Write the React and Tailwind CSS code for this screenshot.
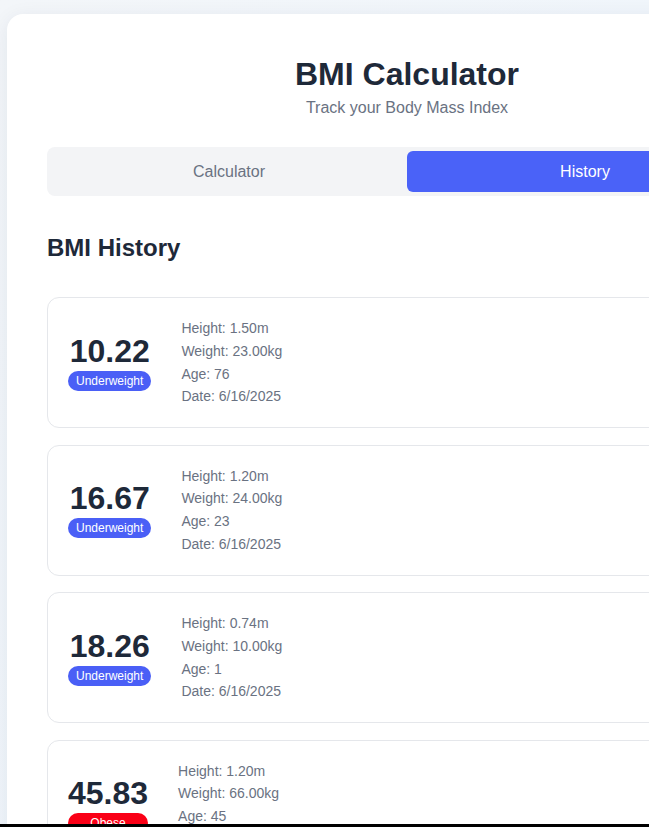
import React, { useState } from 'react';

const history = [
  { bmi: '10.22', category: 'Underweight', height: '1.50', weight: '23.00', age: 76, date: '6/16/2025' },
  { bmi: '16.67', category: 'Underweight', height: '1.20', weight: '24.00', age: 23, date: '6/16/2025' },
  { bmi: '18.26', category: 'Underweight', height: '0.74', weight: '10.00', age: 1, date: '6/16/2025' },
  { bmi: '45.83', category: 'Obese', height: '1.20', weight: '66.00', age: 45, date: '6/16/2025' },
];

const badgeColor = {
  Underweight: 'bg-[#4a5ff6]',
  Obese: 'bg-[#fa0016]',
};

const HistoryCard = ({ entry }) => (
  <div className="flex items-center gap-[30px] rounded-xl border border-gray-200 bg-white px-5 py-[19px]">
    <div className="flex flex-col text-center">
      <span className="text-[32px] font-bold leading-8 text-gray-800">{entry.bmi}</span>
      <span className={`mt-1 rounded-full px-2 py-0.5 text-xs leading-4 text-white ${badgeColor[entry.category]}`}>
        {entry.category}
      </span>
    </div>
    <div className="text-sm leading-[22.75px] text-gray-500">
      <p>Height: {entry.height}m</p>
      <p>Weight: {entry.weight}kg</p>
      <p>Age: {entry.age}</p>
      <p>Date: {entry.date}</p>
    </div>
  </div>
);

export default function App() {
  const [tab, setTab] = useState('history');

  return (
    <div className="min-h-screen overflow-hidden bg-gradient-to-br from-[#f3f6f9] to-[#edf5fd] pl-[7px] pt-[14px] font-['Liberation_Sans',Arial,sans-serif]">
      <div className="w-[800px] shrink-0 rounded-2xl bg-white p-10 shadow-[0_4px_20px_rgba(15,40,80,0.08)]">
        <div className="text-center">
          <h1 className="text-[32px] font-bold leading-10 text-gray-800">BMI Calculator</h1>
          <p className="mt-0.5 text-base leading-6 text-gray-500">Track your Body Mass Index</p>
        </div>

        <div className="mt-[27px] flex rounded-lg bg-gray-100 p-1">
          <button
            onClick={() => setTab('calculator')}
            className={`h-[41px] flex-1 rounded-md text-base ${tab === 'calculator' ? 'bg-[#4a62f8] text-white' : 'text-gray-500'}`}
          >
            Calculator
          </button>
          <button
            onClick={() => setTab('history')}
            className={`h-[41px] flex-1 rounded-md text-base ${tab === 'history' ? 'bg-[#4a62f8] text-white' : 'text-gray-500'}`}
          >
            History
          </button>
        </div>

        <h2 className="mt-9 text-2xl font-bold leading-8 text-gray-800">BMI History</h2>

        <div className="mt-[33px] flex flex-col gap-[16.5px]">
          {history.map((entry, idx) => (
            <HistoryCard key={idx} entry={entry} />
          ))}
        </div>
      </div>
      <div className="fixed bottom-0 left-0 h-[3px] w-full bg-black" />
    </div>
  );
}
